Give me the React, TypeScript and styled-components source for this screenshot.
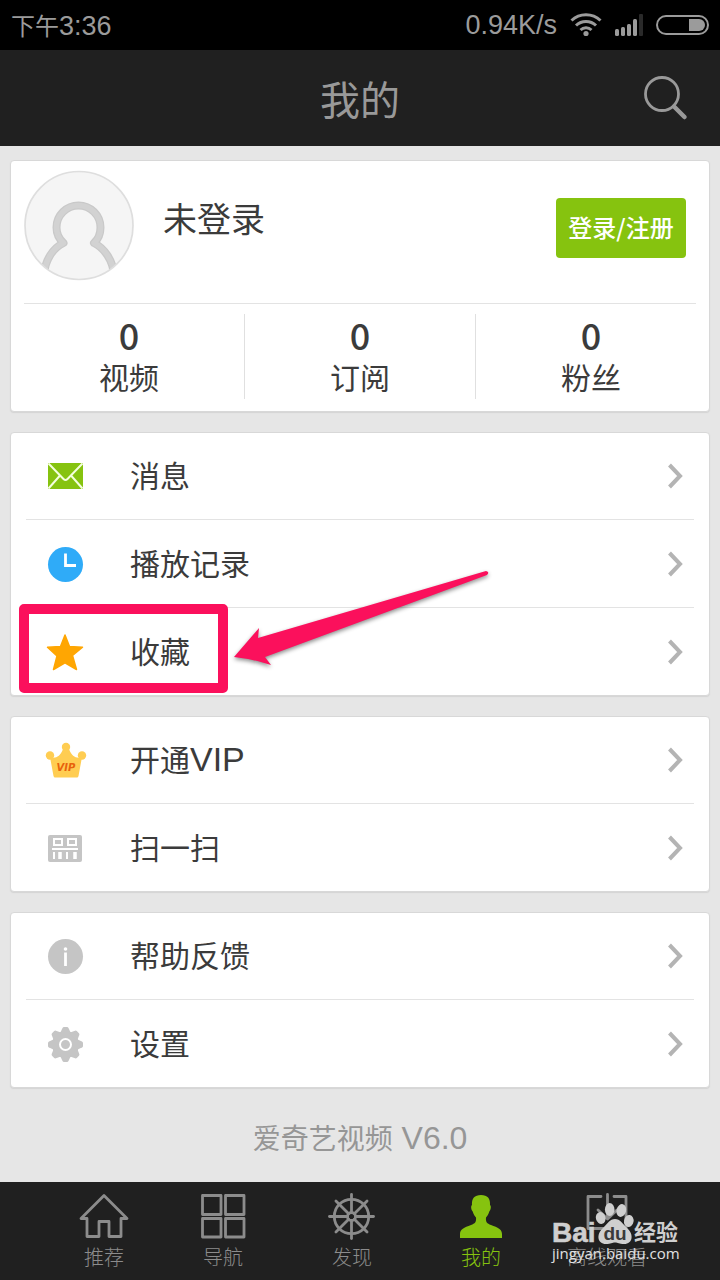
import React from 'react';
import styled, { createGlobalStyle } from 'styled-components';

const GlobalStyle = createGlobalStyle`
  *, *::before, *::after { box-sizing: border-box; }
  body {
    margin: 0;
    background: #e6e6e6;
    color: #3b3b3b;
    font-family: "Noto Sans CJK SC", "Liberation Sans", sans-serif;
  }
  a { color: inherit; text-decoration: none; }
  button { font: inherit; border: 0; padding: 0; background: none; cursor: pointer; }
  ul { list-style: none; margin: 0; padding: 0; }
  svg { display: block; }
`;

const Page = styled.div`
  min-height: 100vh;
  display: flex;
  flex-direction: column;
`;

const StatusBar = styled.div`
  display: flex;
  align-items: center;
  justify-content: space-between;
  height: 50px;
  padding: 0 11px 0 11px;
  background: #000;
  color: #9b9b9b;
`;

const Clock = styled.time`
  font-size: 24px;
  line-height: 48px;
`;

const Latin = styled.span<{ $size: number }>`
  font-family: "Liberation Sans", sans-serif;
  font-size: ${(p) => p.$size}px;
  line-height: 1;
`;

const StatusIcons = styled.div`
  display: flex;
  align-items: center;
  gap: 13px;
`;

const Header = styled.header`
  display: grid;
  grid-template-columns: 1fr auto 1fr;
  align-items: center;
  height: 96px;
  padding: 0 32px;
  background: #202020;
  color: #999;
`;

const Title = styled.h1`
  grid-column: 2;
  margin: 0;
  font-size: 40px;
  font-weight: 400;
  line-height: 60px;
`;

const SearchButton = styled.button`
  justify-self: end;
  color: #999;
`;

const Main = styled.main`
  flex: 1;
  display: flex;
  flex-direction: column;
  gap: 20px;
  padding: 14px 10px 0;
`;

const Card = styled.section`
  background: #fff;
  border: 1px solid #d8d8d8;
  border-radius: 4px;
  box-shadow: 0 1px 1px #d4d4d4;
`;

const Profile = styled.div`
  display: flex;
  align-items: flex-start;
  height: 143px;
  margin: 0 13px;
  padding-top: 9px;
  border-bottom: 1px solid #e3e3e3;
`;

const UserName = styled.h2`
  flex: 1;
  margin: 23px 0 0 28px;
  font-size: 34px;
  font-weight: 400;
  line-height: 50px;
`;

const LoginButton = styled.button`
  width: 130px;
  height: 60px;
  margin: 28px 10px 0 0;
  padding-bottom: 4px;
  border-radius: 4px;
  background: #86c30f;
  color: #fff;
  font-size: 24px;
  font-weight: 500;
`;

const Stats = styled.ul`
  display: grid;
  grid-template-columns: repeat(3, 1fr);
  padding: 10px 3px 12px 2px;
`;

const Stat = styled.li`
  border-left: 1px solid #e0e0e0;
  text-align: center;
  &:first-child { border-left-color: transparent; }
`;

const StatLink = styled.a`
  display: flex;
  flex-direction: column;
  height: 85px;
`;

const StatValue = styled.span`
  font-size: 36px;
  font-weight: 500;
  line-height: 40px;
`;

const StatLabel = styled.span`
  font-size: 30px;
  line-height: 44px;
`;

const Item = styled.li`
  position: relative;
  height: 88px;
  margin: 0 15px;
  border-bottom: 1px solid #e3e3e3;
  &:first-child { height: 87px; }
  &:last-child { height: 87px; border-bottom: 0; }
`;

const ItemLink = styled.a`
  display: flex;
  align-items: center;
  height: 100%;
  padding: 0 11px 0 19px;
`;

const ItemLabel = styled.span`
  flex: 1;
  margin-left: 43px;
  padding-bottom: 4px;
  font-size: 30px;
  line-height: 44px;
`;

const Highlight = styled.div`
  position: absolute;
  z-index: 1;
  left: -7px;
  top: -4px;
  width: 209px;
  height: 89px;
  border: 10px solid #fb105c;
  border-radius: 5px;
  pointer-events: none;
`;

const Arrow = styled.svg`
  position: absolute;
  z-index: 1;
  left: 200px;
  top: -44px;
  pointer-events: none;
  filter: drop-shadow(0 2px 2px rgba(0, 0, 0, 0.45));
`;

const Version = styled.p`
  margin: 6px 0 20px;
  color: #969696;
  font-size: 28px;
  line-height: 46px;
  text-align: center;
`;

const TabBar = styled.nav`
  position: relative;
  background: #202020;
`;

const Tabs = styled.ul`
  display: grid;
  grid-template-columns: 120fr 118fr 140fr 118fr 134fr;
  height: 98px;
  padding: 10px 46px 0 44px;
`;

const Tab = styled.a<{ $active?: boolean }>`
  display: flex;
  flex-direction: column;
  align-items: center;
  color: ${(p) => (p.$active ? '#86c30f' : '#8c8c8c')};
  font-size: 20px;
  font-weight: 300;
  line-height: 30px;
  white-space: nowrap;
`;

const Watermark = styled.svg`
  position: absolute;
  right: 30px;
  top: 8px;
  pointer-events: none;
`;

const WifiIcon = () => (
  <svg width="32" height="26" viewBox="0 0 32 26" fill="none" stroke="#9b9b9b" strokeWidth="3" aria-hidden="true">
    <path d="M1.5 8.500a21 21 0 0 1 29 0" />
    <path d="M6 13.500a14.500 14.500 0 0 1 20 0" />
    <path d="M10.500 18a8 8 0 0 1 11 0" />
    <circle cx="16" cy="21.500" r="2.600" fill="#9b9b9b" stroke="none" />
  </svg>
);

const SignalIcon = () => (
  <svg width="28" height="24" viewBox="0 0 28 24" fill="#9b9b9b" aria-hidden="true">
    <rect x="0" y="16" width="4" height="7" rx="1.500" />
    <rect x="6" y="14" width="4" height="9" rx="1.500" />
    <rect x="12" y="11" width="4" height="12" rx="1.500" />
    <rect x="18" y="6" width="4" height="17" rx="1.500" />
    <rect x="24" y="1" width="4" height="22" rx="1" fill="#2a2a2a" />
  </svg>
);

const BatteryIcon = () => (
  <svg width="53" height="20" viewBox="0 0 53 20" aria-hidden="true">
    <rect x="1" y="1" width="51" height="18" rx="9" fill="none" stroke="#9b9b9b" strokeWidth="2" />
    <path d="M33 4h10a6 6 0 0 1 0 12H33z" fill="#9b9b9b" />
  </svg>
);

const SearchIcon = () => (
  <svg width="46" height="46" viewBox="0 0 46 46" fill="none" stroke="currentColor" aria-hidden="true">
    <circle cx="20" cy="19" r="16.500" strokeWidth="2.800" />
    <path d="M32 31.500L42.500 42" strokeWidth="4.500" strokeLinecap="round" />
  </svg>
);

const bustPath = 'M20 105C21 90 29 78 39.500 73C34 68 32.500 63 32.500 57.500A22 22 0 0 1 76.500 57.500C76.500 63 75.500 68 70 73C80 78 89 90 90 105';

const AvatarIcon = () => (
  <svg width="111" height="111" viewBox="0 0 111 111" aria-hidden="true">
    <defs>
      <clipPath id="avatar-clip"><circle cx="55" cy="55.500" r="54" /></clipPath>
    </defs>
    <circle cx="55" cy="55.500" r="54" fill="#f5f5f5" />
    <g clipPath="url(#avatar-clip)" fill="none" strokeLinejoin="round">
      <path d={bustPath} stroke="#c9c9c9" strokeWidth="8" />
      <path d={bustPath} stroke="#d2d2d2" strokeWidth="5.500" />
    </g>
    <circle cx="55" cy="55.500" r="54" fill="none" stroke="#dedede" strokeWidth="1.700" />
  </svg>
);

const Chevron = () => (
  <svg width="16" height="26" viewBox="0 0 16 26" fill="none" stroke="#b4b4b4" strokeWidth="4" aria-hidden="true">
    <path d="M2.500 2L13 13L2.500 24" />
  </svg>
);

const itemIcon = { width: 42, height: 40, viewBox: '0 0 42 40', 'aria-hidden': true } as const;

const MailIcon = () => (
  <svg {...itemIcon}>
    <rect x="3" y="7" width="35" height="26" rx="1" fill="#86c30f" />
    <path d="M3.500 7.500L18.500 23Q20.500 25 22.500 23L37.500 7.500M3.500 32.500L15 19.500M37.500 32.500L26 19.500" fill="none" stroke="#f4ffdc" strokeWidth="2" />
  </svg>
);

const ClockIcon = () => (
  <svg {...itemIcon}>
    <circle cx="20.500" cy="20.500" r="17.500" fill="#2fabf8" />
    <path d="M20.500 9.500V21.500H31" fill="none" stroke="#fff" strokeWidth="2.800" />
  </svg>
);

const StarIcon = () => (
  <svg {...itemIcon}>
    <path d="M20 3L24.500 14.500L37.500 15.200L27.500 23.500L31.500 37.500L20 30.800L8.500 37.500L12 24L2.500 15.200L15.500 14.500Z" fill="#ffa602" stroke="#ffa602" strokeWidth="1.500" strokeLinejoin="round" />
  </svg>
);

const CrownIcon = () => (
  <svg {...itemIcon}>
    <g fill="#ffcd52">
      <circle cx="21" cy="7" r="4.200" />
      <circle cx="5" cy="15.500" r="4.200" />
      <circle cx="37" cy="15.500" r="4.200" />
      <path d="M5 17C10 19 15 17 18 9H24C27 17 32 19 37 17L33.500 36Q33 37.500 32 37.500H10Q9 37.500 8.500 36Z" />
    </g>
    <text x="21" y="31" textAnchor="middle" fontFamily="DejaVu Sans, sans-serif" fontSize="10" fontWeight="700" fontStyle="italic" fill="#e8620c">VIP</text>
  </svg>
);

const ScanIcon = () => (
  <svg {...itemIcon}>
    <rect x="3" y="7" width="34" height="27" rx="2" fill="#c5c5c5" />
    <g fill="none" stroke="#fff" strokeWidth="2">
      <path d="M9 11H17V17H9ZM23 11H31V17H23Z" />
      <path d="M7 21H33" />
      <path d="M9 24V31M22 24V31" />
      <path d="M15 24V31M30 24V31" strokeWidth="3.500" />
    </g>
  </svg>
);

const InfoIcon = () => (
  <svg {...itemIcon}>
    <circle cx="20.500" cy="20.500" r="17.500" fill="#c5c5c5" />
    <circle cx="20.500" cy="13" r="1.800" fill="#fff" />
    <path d="M20.500 16.500V30" stroke="#fff" strokeWidth="2.800" />
  </svg>
);

const GearIcon = () => (
  <svg {...itemIcon}>
    <g fill="#c5c5c5" transform="translate(20.5 20.5)">
      <circle r="13.500" />
      {[0, 45, 90, 135, 180, 225, 270, 315].map((angle) => (
        <path key={angle} transform={`rotate(${angle})`} d="M-5.500 -11L-3 -16.500Q-2.500 -17.500 -1.500 -17.500H1.500Q2.500 -17.500 3 -16.500L5.500 -11Z" />
      ))}
      <circle r="5.500" stroke="#fff" strokeWidth="2" />
    </g>
  </svg>
);

const tabIcon = { width: 52, height: 50, viewBox: '0 0 52 50', fill: 'none', stroke: 'currentColor', strokeWidth: 2.8, strokeLinejoin: 'round', strokeLinecap: 'round', 'aria-hidden': true } as const;

const HomeIcon = () => (
  <svg {...tabIcon}>
    <path d="M9 26.500H3L26 3.500L49 26.500H43V44.500H31V29.500H21V44.500H9Z" />
  </svg>
);

const GridIcon = () => (
  <svg {...tabIcon}>
    <path d="M5.500 3.500H24V22.500H5.500ZM28.500 3.500H47V22.500H28.500ZM5.500 26.500H24V45H5.500ZM28.500 26.500H47V45H28.500Z" />
  </svg>
);

const WheelIcon = () => (
  <svg {...tabIcon}>
    <circle cx="25.500" cy="24.500" r="17.200" />
    <circle cx="25.500" cy="24.500" r="4" />
    {[0, 45, 90, 135, 180, 225, 270, 315].map((angle) => (
      <path key={angle} d="M25.500 20.500V2.500" transform={`rotate(${angle} 25.5 24.500)`} />
    ))}
  </svg>
);

const PersonIcon = () => (
  <svg {...tabIcon} fill="currentColor" stroke="none">
    <path d="M26 3C32.500 3 35.500 6.500 35 13C36.500 14 35.800 18 34.300 19.500C33.500 22.500 32 24.500 31 25.500C30.500 30 32 31.500 36 33C43 35.500 47 37.500 47 42V46H5V42C5 37.500 9 35.500 16 33C20 31.500 21.500 30 21 25.500C20 24.500 18.500 22.500 17.700 19.500C16.200 18 15.500 14 17 13C16.500 6.500 19.500 3 26 3Z" />
  </svg>
);

const DownloadIcon = () => (
  <svg {...tabIcon}>
    <path d="M20 4.500H7V36.500H45V4.500H33M26.500 2.500V25M17 18L26.500 27L36 18" />
  </svg>
);

const BaiduMark = () => (
  <Watermark width="140" height="80" viewBox="0 0 140 80" aria-label="Baidu 经验">
    <g fill="#cfcfcf" fontFamily="Liberation Sans, Noto Sans CJK SC, sans-serif">
      <text x="2" y="52" fontSize="28" fontWeight="700" stroke="#cfcfcf" strokeWidth="0.600">Bai</text>
      <ellipse cx="50.700" cy="28" rx="4.800" ry="6" transform="rotate(-15 50.700 28)" />
      <ellipse cx="59.700" cy="19.500" rx="4.800" ry="6.500" />
      <ellipse cx="71.300" cy="20.500" rx="4.800" ry="6.500" transform="rotate(15 71.300 20.500)" />
      <ellipse cx="78.800" cy="31" rx="4.800" ry="6" transform="rotate(10 78.800 31)" />
      <path d="M65 29C70 29 73 34 77 38C84 44 83 54 74 54C69 54 68 52.500 65 52.500C62 52.500 61 54 56 54C47 54 46 44 53 38C57 34 60 29 65 29Z" />
      <text x="53.500" y="50" fontSize="19" fontWeight="700" fill="#3a3a3a">du</text>
      <text x="84" y="50" fontSize="22" fontWeight="700">经验</text>
    </g>
    <text x="2" y="69" fontSize="15" fontFamily="Open Sans, Noto Sans, sans-serif" fill="#e0e0e0">jingyan.baidu.com</text>
  </Watermark>
);

type Entry = { label: React.ReactNode; icon: React.ReactNode; marked?: boolean };

const groups: Entry[][] = [
  [
    { label: '消息', icon: <MailIcon /> },
    { label: '播放记录', icon: <ClockIcon /> },
    { label: '收藏', icon: <StarIcon />, marked: true },
  ],
  [
    { label: <>开通<Latin $size={34}>VIP</Latin></>, icon: <CrownIcon /> },
    { label: '扫一扫', icon: <ScanIcon /> },
  ],
  [
    { label: '帮助反馈', icon: <InfoIcon /> },
    { label: '设置', icon: <GearIcon /> },
  ],
];

const stats = [
  { value: 0, label: '视频' },
  { value: 0, label: '订阅' },
  { value: 0, label: '粉丝' },
];

const tabs = [
  { label: '推荐', icon: <HomeIcon /> },
  { label: '导航', icon: <GridIcon /> },
  { label: '发现', icon: <WheelIcon /> },
  { label: '我的', icon: <PersonIcon />, active: true },
  { label: '离线观看', icon: <DownloadIcon /> },
];

export default function App() {
  return (
    <Page>
      <GlobalStyle />
      <StatusBar>
        <Clock>下午<Latin $size={27}>3:36</Latin></Clock>
        <StatusIcons>
          <Latin $size={27}>0.94K/s</Latin>
          <WifiIcon />
          <SignalIcon />
          <BatteryIcon />
        </StatusIcons>
      </StatusBar>
      <Header>
        <Title>我的</Title>
        <SearchButton type="button" aria-label="搜索"><SearchIcon /></SearchButton>
      </Header>
      <Main>
        <Card>
          <Profile>
            <AvatarIcon />
            <UserName>未登录</UserName>
            <LoginButton type="button">登录/注册</LoginButton>
          </Profile>
          <Stats>
            {stats.map((stat) => (
              <Stat key={stat.label}>
                <StatLink href="#">
                  <StatValue>{stat.value}</StatValue>
                  <StatLabel>{stat.label}</StatLabel>
                </StatLink>
              </Stat>
            ))}
          </Stats>
        </Card>
        {groups.map((group, g) => (
          <Card key={g}>
            <ul>
              {group.map((entry, i) => (
                <Item key={i}>
                  <ItemLink href="#">
                    {entry.icon}
                    <ItemLabel>{entry.label}</ItemLabel>
                    <Chevron />
                  </ItemLink>
                  {entry.marked && (
                    <>
                      <Highlight />
                      <Arrow width="270" height="110" viewBox="0 0 270 110" aria-hidden="true">
                        <path d="M8 93L33 64L32 74L260 7Q264 8 261 11L39 93L45 101Q28 95 8 93Z" fill="#fb105c" />
                      </Arrow>
                    </>
                  )}
                </Item>
              ))}
            </ul>
          </Card>
        ))}
        <Version>爱奇艺视频<Latin $size={32}> V6.0</Latin></Version>
      </Main>
      <TabBar>
        <Tabs>
          {tabs.map((tab) => (
            <li key={tab.label}>
              <Tab href="#" $active={tab.active}>
                {tab.icon}
                {tab.label}
              </Tab>
            </li>
          ))}
        </Tabs>
        <BaiduMark />
      </TabBar>
    </Page>
  );
}
